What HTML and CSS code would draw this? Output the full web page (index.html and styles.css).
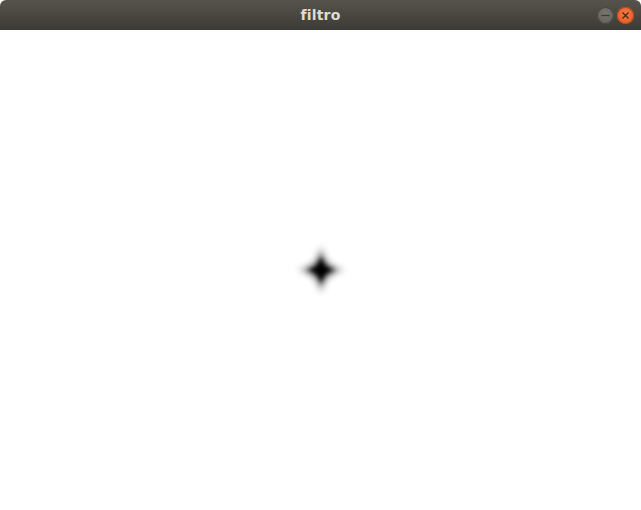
FILE: index.html
```html
<!DOCTYPE html>
<html>
<head>
<meta charset="utf-8">
<link rel="stylesheet" href="styles.css">
</head>
<body>
<div class="window">
  <div class="titlebar">
    <span class="title">filtro</span>
    <div class="controls">
      <span class="btn min"><svg width="17" height="17" viewBox="0 0 17 17"><line x1="4.5" y1="8.5" x2="12.5" y2="8.5" stroke="#3a3935" stroke-width="1.3"/></svg></span>
      <span class="btn close"><svg width="17" height="17" viewBox="0 0 17 17"><path d="M5.5 5.5L11.5 11.5M11.5 5.5L5.5 11.5" stroke="#4a2a18" stroke-width="1.4"/></svg></span>
    </div>
  </div>
  <div class="canvas">
    <svg class="star" width="70" height="70" viewBox="0 0 70 70">
      <defs>
        <filter id="blur" x="-50%" y="-50%" width="200%" height="200%"><feGaussianBlur stdDeviation="3.5"/></filter>
        <filter id="blur2" x="-50%" y="-50%" width="200%" height="200%"><feGaussianBlur stdDeviation="2.2"/></filter>
      </defs>
      <path d="M35 11 Q37 33 59 35 Q37 37 35 59 Q33 37 11 35 Q33 33 35 11Z" fill="#000" opacity="0.6" filter="url(#blur)"/>
      <path d="M35 20 Q36.5 33.5 50 35 Q36.5 36.5 35 50 Q33.5 36.5 20 35 Q33.5 33.5 35 20Z" fill="#000" filter="url(#blur2)"/>
    </svg>
  </div>
</div>
</body>
</html>
```
FILE: styles.css
```css
html, body {
  margin: 0;
  padding: 0;
  width: 641px;
  height: 510px;
  overflow: hidden;
  background: #ffffff;
}
.window {
  display: flex;
  flex-direction: column;
  width: 641px;
  height: 510px;
}
.titlebar {
  height: 30px;
  flex: none;
  background: linear-gradient(#57534c, #3d3b37);
  border-radius: 6px 6px 0 0;
  display: flex;
  align-items: center;
  justify-content: center;
  position: relative;
}
.title {
  font-family: "DejaVu Sans", "Noto Sans", sans-serif;
  font-weight: bold;
  font-size: 14px;
  color: #dfdbd2;
  letter-spacing: 0.2px;
}
.controls {
  position: absolute;
  right: 7px;
  top: 7px;
  display: flex;
  gap: 3px;
}
.btn {
  width: 17px;
  height: 17px;
  border-radius: 50%;
  display: block;
}
.btn svg { display: block; }
.min {
  background: radial-gradient(circle at 50% 40%, #7a7873, #5c5a55);
  box-shadow: inset 0 0 0 1px #46443f;
}
.close {
  background: radial-gradient(circle at 50% 40%, #f37c48, #e2541f);
  box-shadow: inset 0 0 0 1px #c04713;
}
.canvas {
  flex: 1;
  background: #ffffff;
  display: flex;
  align-items: center;
  justify-content: center;
}
.star {
  display: block;
}
```
